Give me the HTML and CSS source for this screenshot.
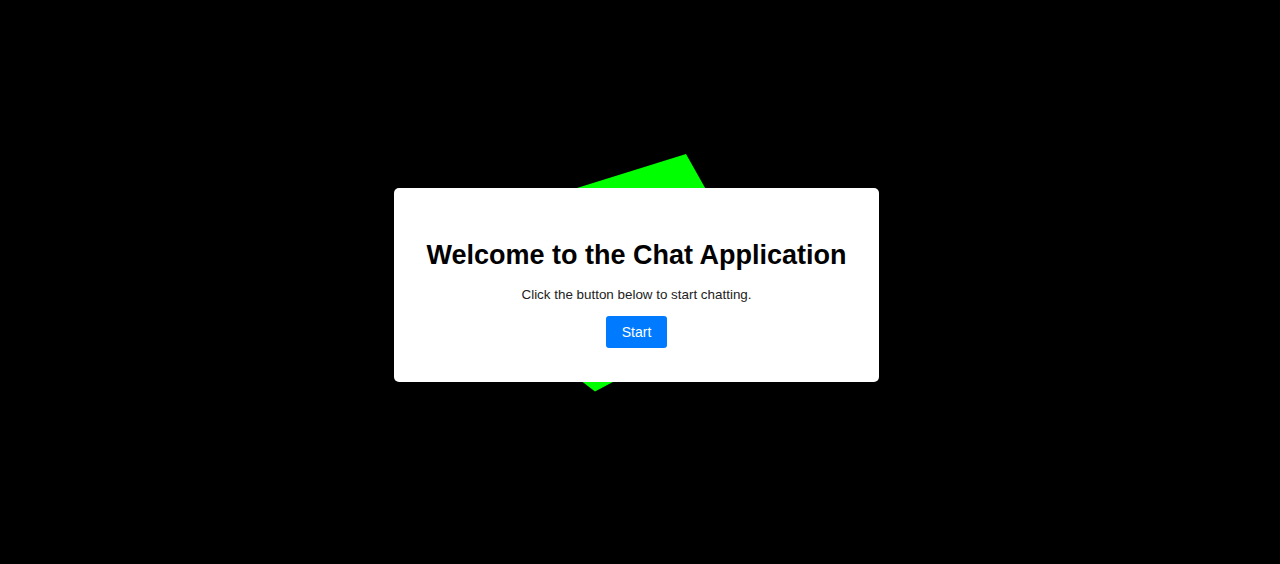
FILE: index.html
```html
<!DOCTYPE html>
<html lang="en">
<head>
<meta charset="utf-8">
<title>Chat Application</title>
<link rel="stylesheet" href="styles.css">
</head>
<body>
<div class="stage">
  <svg class="shape" width="1280" height="564" viewBox="0 0 1280 564" aria-hidden="true">
    <polygon points="686,154 768,300 595,391.5 554,360 474,220" fill="#00ff00"/>
  </svg>
  <div class="card">
    <h1 class="title">Welcome to the Chat Application</h1>
    <p class="lead">Click the button below to start chatting.</p>
    <button class="start-btn" type="button">Start</button>
  </div>
</div>
</body>
</html>
```

FILE: styles.css
```css
html, body {
  margin: 0;
  padding: 0;
  background: #000;
  height: 100%;
  overflow: hidden;
}

body {
  font-family: "Liberation Sans", Arial, sans-serif;
}

.stage {
  position: relative;
  width: 1280px;
  height: 564px;
  display: flex;
  align-items: center;
  justify-content: center;
  box-sizing: border-box;
  padding: 6px 7px 0 0;
}

.shape {
  position: absolute;
  left: 0;
  top: 0;
}

.card {
  position: relative;
  width: 485px;
  box-sizing: border-box;
  background: #fff;
  border-radius: 5px;
  padding: 52px 20px 34px;
  text-align: center;
}

.title {
  margin: 0 0 16px;
  font-size: 27px;
  line-height: 31px;
  font-weight: 700;
  color: #000;
}

.lead {
  margin: 0 0 13px;
  font-size: 13.4px;
  line-height: 16px;
  color: #222;
}

.start-btn {
  display: inline-block;
  height: 32px;
  padding: 0 16px;
  border: none;
  border-radius: 3px;
  background: #007bff;
  color: #fff;
  font-family: "Liberation Sans", Arial, sans-serif;
  font-size: 14px;
  line-height: 32px;
  cursor: pointer;
}
```
